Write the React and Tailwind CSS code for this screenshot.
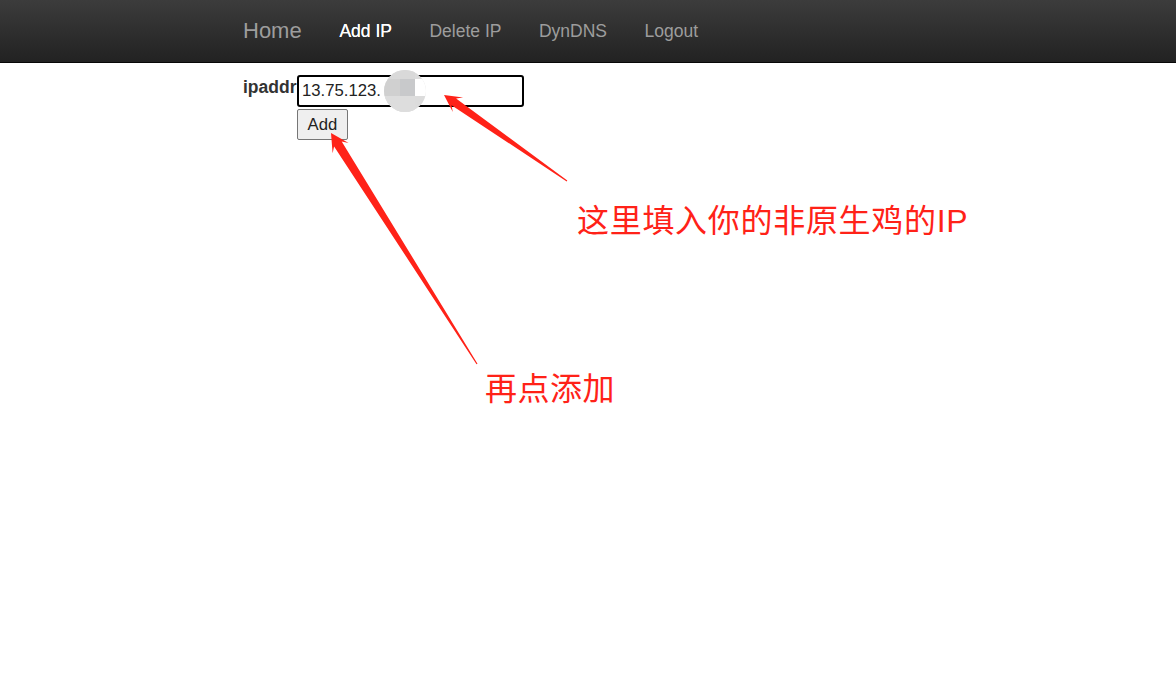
import React from "react";

function arrowPoints(S, T, o) {
  const { headLen, headHalf, notch, shaftHead, shaftTail } = o;
  const dx = T[0] - S[0];
  const dy = T[1] - S[1];
  const len = Math.hypot(dx, dy);
  const u = [dx / len, dy / len];
  const n = [-u[1], u[0]];
  const p = (base, along, side) => [
    base[0] - u[0] * along + n[0] * side,
    base[1] - u[1] * along + n[1] * side,
  ];
  const pts = [
    T,
    p(T, headLen, headHalf),
    p(T, notch, shaftHead),
    [S[0] + n[0] * shaftTail, S[1] + n[1] * shaftTail],
    [S[0] - n[0] * shaftTail, S[1] - n[1] * shaftTail],
    p(T, notch, -shaftHead),
    p(T, headLen, -headHalf),
  ];
  return pts.map((q) => q[0].toFixed(1) + "," + q[1].toFixed(1)).join(" ");
}

const RED = "#ff2218";

export default function App() {
  const a1 = arrowPoints([567, 181], [444, 95], {
    headLen: 17,
    headHalf: 9,
    notch: 12,
    shaftHead: 4,
    shaftTail: 0.6,
  });
  const a2 = arrowPoints([477, 364], [331, 133], {
    headLen: 18,
    headHalf: 9.5,
    notch: 13,
    shaftHead: 4.5,
    shaftTail: 0.6,
  });

  return (
    <div
      className="relative w-[1176px] h-[687px] bg-white overflow-hidden"
      style={{ fontFamily: '"Liberation Sans", Arial, sans-serif' }}
    >
      <nav className="h-[63px] border-b border-[#080808] bg-gradient-to-b from-[#3c3c3c] to-[#222222]">
        <div className="mx-auto w-[728px] h-[62px] flex items-center">
          <span className="px-[19px] text-[22px] leading-[24px] text-[#9d9d9d]">Home</span>
          <span className="px-[18.75px] text-[17.5px] leading-[24px] text-white [text-shadow:0_0_0.4px_#fff]">Add IP</span>
          <span className="px-[18.75px] text-[17.5px] leading-[24px] text-[#9d9d9d]">Delete IP</span>
          <span className="px-[18.75px] text-[17.5px] leading-[24px] text-[#9d9d9d]">DynDNS</span>
          <span className="px-[18.75px] text-[17.5px] leading-[24px] text-[#9d9d9d]">Logout</span>
        </div>
      </nav>

      <main className="mx-auto w-[728px] pt-[12px] pl-[19px]">
        <div className="flex items-start">
          <label className="w-[54px] text-[17.5px] leading-[25px] font-bold text-[#333333]">ipaddr</label>
          <div className="flex flex-col items-start gap-[2px]">
            <div className="relative">
              <div className="w-[227px] h-[32px] border-2 border-black rounded-[3px] flex items-center pl-[3px] text-[16.7px] text-[#222222]">
                13.75.123.
              </div>
              <svg className="absolute left-[86px] top-[-6px]" width="44" height="44" viewBox="0 0 44 44">
                <defs>
                  <clipPath id="blurc">
                    <circle cx="22" cy="22" r="21" />
                  </clipPath>
                </defs>
                <g clipPath="url(#blurc)">
                  <rect x="0" y="0" width="44" height="44" fill="#dcdcdc" />
                  <rect x="0" y="10" width="17" height="17" fill="#d0d0d0" />
                  <rect x="17" y="10" width="15" height="17" fill="#c8c9cb" />
                  <rect x="0" y="0" width="32" height="10" fill="#d9d9d9" />
                  <rect x="0" y="27" width="32" height="17" fill="#dddddd" />
                  <rect x="32" y="10" width="12" height="17" fill="#ffffff" />
                </g>
              </svg>
            </div>
            <button className="h-[31px] px-[9.5px] bg-[#efefef] border border-[#767676] rounded-[2px] text-[16.7px] leading-[20px] text-[#222222]">
              Add
            </button>
          </div>
        </div>
      </main>

      <svg className="absolute left-0 top-0 pointer-events-none" width="1176" height="687">
        <polygon points={a1} fill={RED} />
        <polygon points={a2} fill={RED} />
      </svg>

      <div
        className="absolute left-[577px] top-[202px] text-[32px] leading-[32px] whitespace-nowrap tracking-[0.7px]"
        style={{ color: RED, fontFamily: '"Noto Sans CJK SC", "Noto Sans", sans-serif' }}
      >
        这里填入你的非原生鸡的
        <span style={{ fontFamily: '"Liberation Sans", Arial, sans-serif' }}>IP</span>
      </div>
      <div
        className="absolute left-[485px] top-[370px] text-[32px] leading-[32px] whitespace-nowrap tracking-[0.5px]"
        style={{ color: RED, fontFamily: '"Noto Sans CJK SC", "Noto Sans", sans-serif' }}
      >
        再点添加
      </div>
    </div>
  );
}
